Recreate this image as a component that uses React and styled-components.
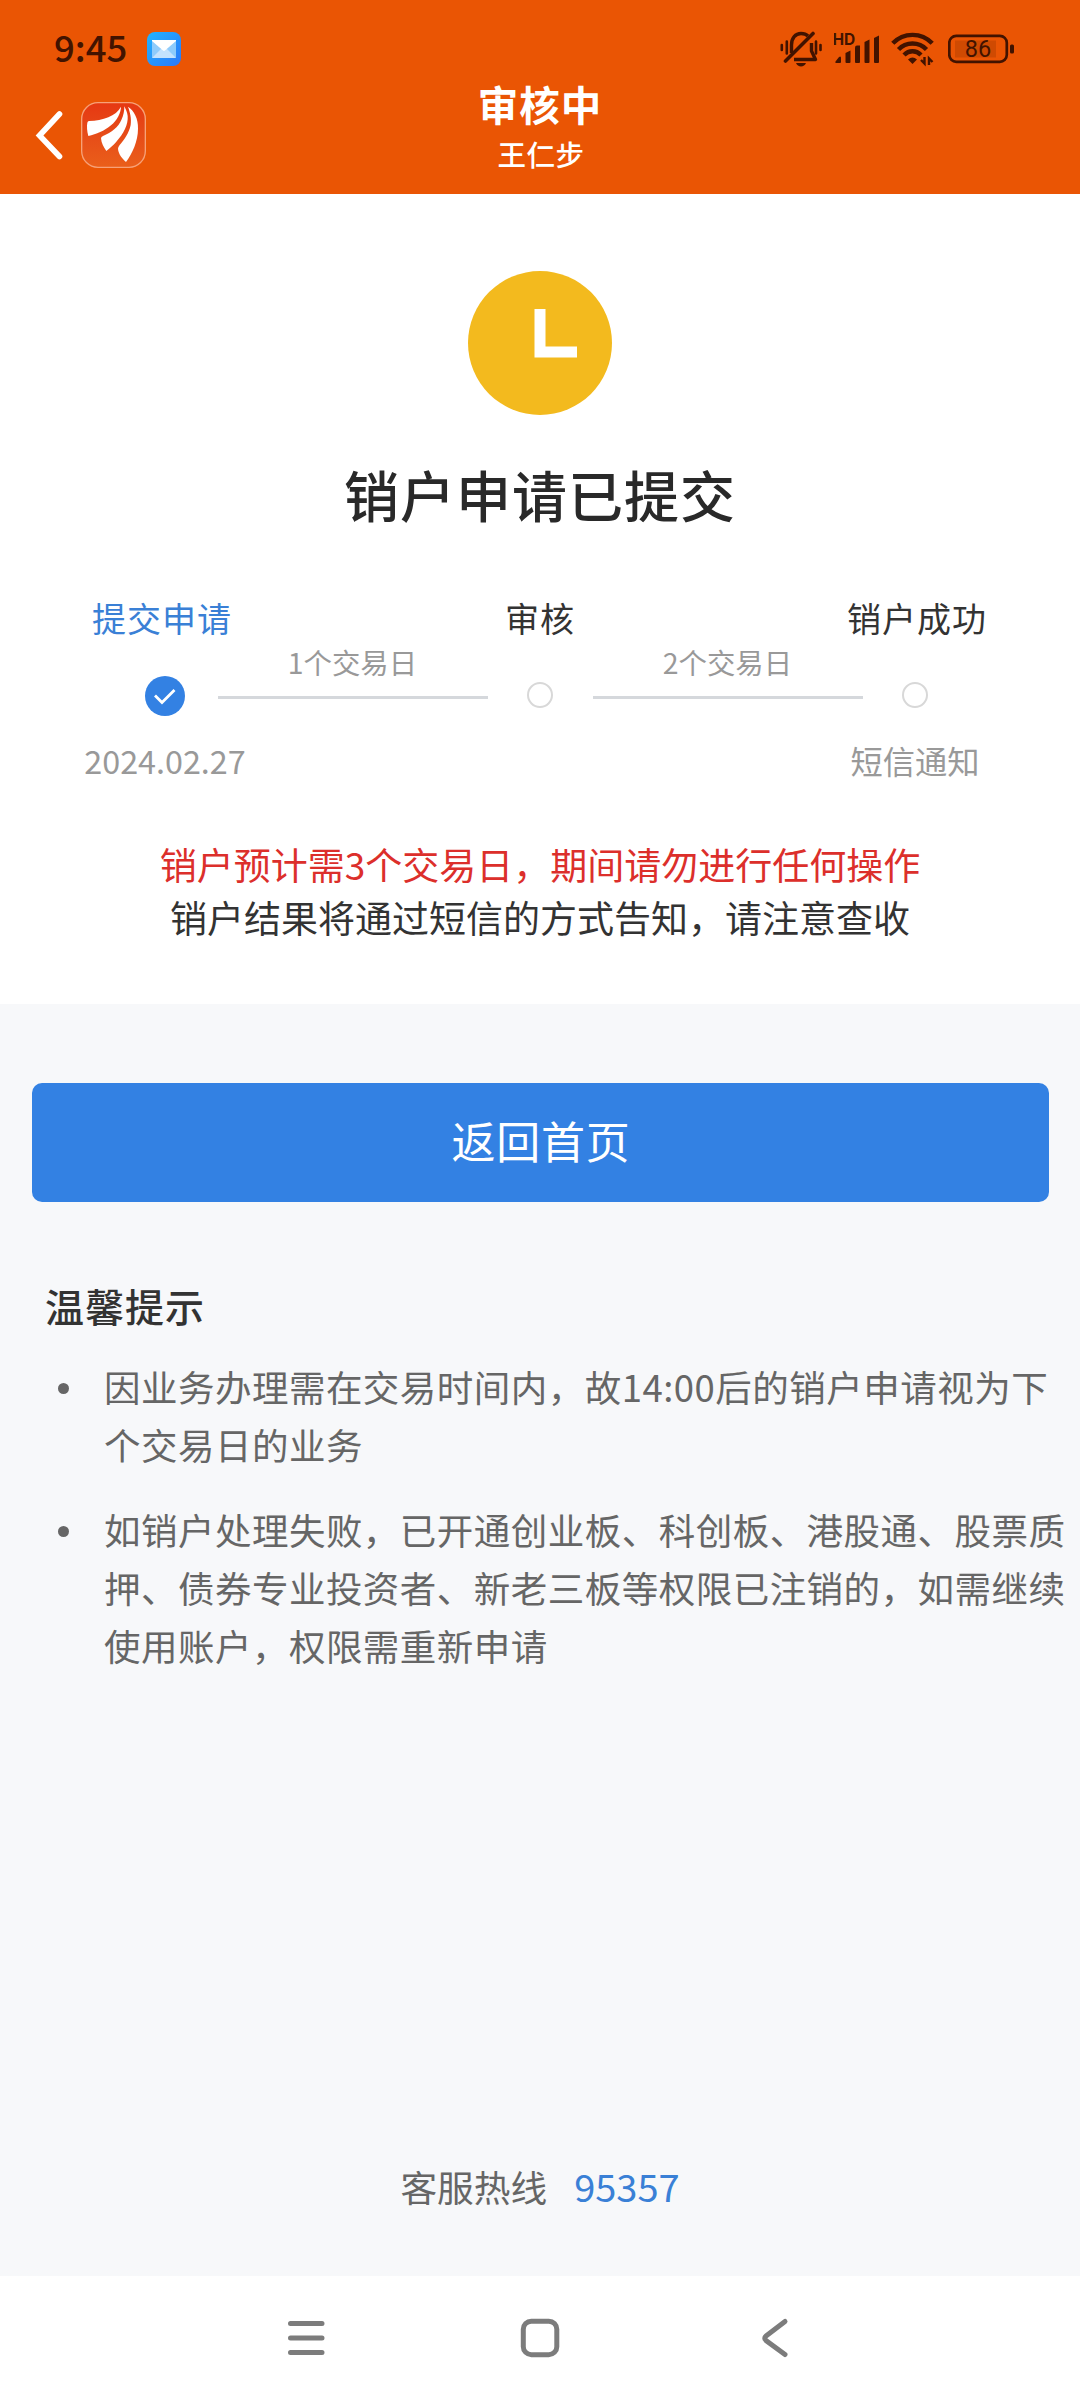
import React from 'react'
import styled, { createGlobalStyle } from 'styled-components'

const GlobalStyle = createGlobalStyle`
    * {
        box-sizing: border-box;
    }
    body {
        margin: 0;
        font-family: 'Noto Sans CJK SC', 'Noto Sans', sans-serif;
    }
`

const ink = '#421300'

const Screen = styled.div`
    display: flex;
    flex-direction: column;
    width: 1080px;
    height: 2400px;
    overflow: hidden;
    background: #f7f8fa;
`

const Header = styled.header`
    flex: none;
    height: 194px;
    background: #ea5504;
`

const StatusBar = styled.div`
    display: flex;
    align-items: center;
    justify-content: space-between;
    height: 98px;
    padding: 0 66px 0 54px;
`

const StatusGroup = styled.div`
    display: flex;
    align-items: center;
    gap: ${(props) => props.$gap}px;
`

const Time = styled.span`
    margin-top: -5px;
    font-size: 36.5px;
    line-height: 50px;
    font-weight: 500;
    color: ${ink};
`

const TitleBar = styled.div`
    display: grid;
    grid-template-columns: 1fr 240px 1fr;
    height: 96px;
    margin-top: -20px;
`

const TitleLeft = styled.div`
    display: flex;
    align-items: center;
    gap: 18px;
    padding: 18px 0 0 35px;
    height: 96px;
`

const Titles = styled.div`
    display: flex;
    flex-direction: column;
    align-items: center;
    color: #fff;
`

const Title = styled.h1`
    margin: 0;
    font-size: 40.5px;
    line-height: 52px;
    letter-spacing: 1px;
    font-weight: 700;
`

const Subtitle = styled.div`
    padding: 1px 0 0 2px;
    font-size: 28.5px;
    line-height: 46px;
    letter-spacing: 0.5px;
    font-weight: 500;
`

const Result = styled.section`
    display: flex;
    flex-direction: column;
    align-items: center;
    flex: none;
    height: 810px;
    padding-top: 77px;
    background: #fff;
`

const ResultTitle = styled.h2`
    margin: 38px 0 0;
    font-size: 55px;
    line-height: 80px;
    letter-spacing: 1px;
    font-weight: 500;
    color: #292929;
`

const Steps = styled.div`
    display: flex;
    margin-top: 59px;
`

const StepItem = styled.div`
    display: flex;
    flex-direction: column;
    align-items: center;
    width: 105px;
`

const StepLabel = styled.div`
    padding: 1px ${(props) => props.$insetRight || 0}px 0 ${(props) => props.$insetLeft || 0}px;
    font-size: 34px;
    line-height: 50px;
    letter-spacing: 1px;
    white-space: nowrap;
    color: ${(props) => (props.$active ? '#3a80d6' : '#333')};
`

const DotSlot = styled.div`
    display: flex;
    align-items: center;
    justify-content: center;
    height: 40px;
    margin-top: 33px;
`

const Dot = styled.span`
    width: 26px;
    height: 26px;
    margin-bottom: 3px;
    border: 2px solid #d8d8d8;
    border-radius: 50%;
`

const StepNote = styled.div`
    margin-top: 19px;
    font-size: 32.3px;
    line-height: 50px;
    white-space: nowrap;
    color: #999;
`

const Connector = styled.div`
    width: 270px;
    height: 107px;
    padding-top: 48px;
    border-bottom: 3px solid #d5d8dc;
    font-size: 28.4px;
    line-height: 44px;
    text-align: center;
    color: #999;
`

const Notice = styled.p`
    margin: 0;
    font-size: 37px;
    line-height: 53px;
    color: ${(props) => (props.$warn ? '#dc2f2b' : '#333')};
`

const Notices = styled.div`
    margin-top: 53px;
    text-align: center;
`

const Content = styled.main`
    display: flex;
    flex-direction: column;
    flex: 1;
    padding: 79px 0 65px;
`

const HomeButton = styled.button`
    flex: none;
    height: 119px;
    margin: 0 31px 0 32px;
    padding: 0 0 5px 1px;
    border: 0;
    border-radius: 10px;
    font-family: inherit;
    font-size: 44px;
    line-height: 60px;
    letter-spacing: 0.7px;
    color: #fff;
    background: #3381e3;
`

const TipsTitle = styled.h3`
    margin: 73px 0 0 45px;
    font-size: 39px;
    line-height: 60px;
    letter-spacing: 1px;
    font-weight: 500;
    color: #333;
`

const TipList = styled.ul`
    display: flex;
    flex-direction: column;
    gap: 27px;
    margin: 23px 0 0;
    padding: 0 12px 0 58px;
    list-style: none;
`

const Tip = styled.li`
    display: flex;
    gap: 35px;
    font-size: 36.5px;
    line-height: 58px;
    letter-spacing: 0.48px;
    color: #666;

    &::before {
        content: '';
        flex: none;
        width: 11px;
        height: 11px;
        margin-top: 25px;
        border-radius: 50%;
        background: #666;
    }
`

const Hotline = styled.div`
    display: flex;
    align-items: center;
    justify-content: center;
    gap: 27px;
    margin-top: auto;
    font-size: 36.7px;
    line-height: 50px;
    color: #666;
`

const Phone = styled.a`
    font-size: 38px;
    color: #3a80d6;
`

const NavBar = styled.nav`
    display: flex;
    justify-content: space-between;
    flex: none;
    height: 124px;
    padding: 38px 283px 0;
    background: #fff;
`

function MailIcon() {
    return (
        <svg width="34" height="34" viewBox="0 0 34 34">
            <defs>
                <linearGradient id="mail" x1="0" y1="0" x2="1" y2="1">
                    <stop offset="0" stopColor="#22b4ff" />
                    <stop offset="1" stopColor="#2b77f8" />
                </linearGradient>
            </defs>
            <rect width="34" height="34" rx="8" fill="url(#mail)" />
            <rect x="5" y="8" width="24" height="18" rx="1" fill="#8ecbfb" />
            <path d="M5 26 L14 17 H20 L29 26 Z" fill="#c3e2fd" />
            <path d="M5 8 H29 V9 L18 18.5 Q17 19.3 16 18.5 L5 9 Z" fill="#fff" />
        </svg>
    )
}

function MutedBell() {
    return (
        <svg width="42" height="36" viewBox="0 0 42 36" fill="none" stroke={ink} strokeWidth="3.4">
            <path d="M11.5 22 V14 C11.5 7 15.5 2.5 21 2.5 C24 2.5 26.5 3.5 28 5" />
            <path d="M31.5 12 V20 L35.5 28.5 H14" strokeLinejoin="round" />
            <path d="M5.5 30 L33 2.5" strokeWidth="3.6" strokeLinecap="round" />
            <path d="M16 32 H26 C24.5 36.5 17.5 36.5 16 32 Z" fill={ink} stroke="none" />
            <path d="M1.8 14 V19 M6.8 10.5 V22.5 M36 10.5 V22.5 M40.5 14 V19" strokeWidth="2.6" strokeLinecap="round" />
        </svg>
    )
}

function Signal() {
    return (
        <svg width="45" height="36" viewBox="1 0 45 36" fill={ink}>
            <text x="-0.5" y="14" fontSize="15.5" fontWeight="700" fontFamily="Inter, sans-serif">
                HD
            </text>
            <path d="M3 32 Q2 32 2.5 30.5 L6 26 Q8 24.5 8 27 V31 Q8 32 7 32 Z" />
            <path d="M12.5 22 L17.5 19.5 V31 Q17.5 32 16.5 32 H13.5 Q12.5 32 12.5 31 Z" />
            <path d="M22 16.5 Q22 14.5 24 14.5 H27 V31 Q27 32 26 32 H23 Q22 32 22 31 Z" />
            <path d="M31.5 11 L36.5 8.5 V31 Q36.5 32 35.5 32 H32.5 Q31.5 32 31.5 31 Z" />
            <path d="M41 7 L46 4.5 V31 Q46 32 45 32 H42 Q41 32 41 31 Z" />
        </svg>
    )
}

function Wifi() {
    return (
        <svg width="45" height="36" viewBox="0 0 45 36" fill="none" stroke={ink} strokeWidth="4.4">
            <path d="M1.8 12.3 C12.5 1 30.5 1 41.2 12.3" />
            <path d="M7.5 18.5 C15 10.5 28 10.5 35.5 18.5" />
            <path d="M13 24 C18 19 25 19 30 24" />
            <path d="M17 28.5 Q21.5 24.5 26 28.5 L21.5 33 Z" fill={ink} stroke="none" />
            <path d="M30 29 L33.5 32.5 V26 M38 34 V27.5 L41.5 31" strokeWidth="2.4" />
        </svg>
    )
}

function Battery() {
    return (
        <svg width="66" height="30" viewBox="0 0 66 30">
            <rect x="7" y="6.5" width="41" height="17" fill="#cf4a02" />
            <rect x="1.3" y="1.8" width="57.5" height="26" rx="7" fill="none" stroke={ink} strokeWidth="2.7" />
            <rect x="62" y="10.5" width="4" height="9" rx="1.5" fill={ink} />
            <text x="30" y="23" textAnchor="middle" fontSize="23.5" fontFamily="Roboto, sans-serif" fill={ink}>
                86
            </text>
        </svg>
    )
}

function BackArrow() {
    return (
        <svg width="28" height="50" viewBox="0 0 28 50" fill="none" stroke="#fff" strokeWidth="5.6">
            <path d="M24.5 4 L4.5 25.5 L24.5 46.5" strokeLinecap="round" strokeLinejoin="miter" />
        </svg>
    )
}

function BrandLogo() {
    return (
        <svg width="65" height="66" viewBox="0 0 195 198">
            <defs>
                <linearGradient id="brand" x1="0" y1="0" x2="0" y2="1">
                    <stop offset="0" stopColor="#e63812" />
                    <stop offset="0.45" stopColor="#e64a18" />
                    <stop offset="1" stopColor="#ea5f1a" />
                </linearGradient>
            </defs>
            <rect x="2" y="2" width="191" height="194" rx="49" fill="url(#brand)" stroke="#f7a178" strokeWidth="4" />
            <g fill="#fff">
                <path d="M24 57 C66 55 105 43 120 14 C120 32 108 55 90 70 C70 87 46 97 22 102 C18 88 17 72 19 62 Q20 58 24 57 Z" />
                <path d="M130 13 C134 22 139 30 140 42 C142 68 128 95 106 119 C96 130 86 139 76 147 C68 136 61 124 60 109 Q60 104 66 102 C92 91 112 75 121 54 C128 40 130 27 130 13 Z" />
                <path d="M141 14 C160 27 172 50 171 80 C171 118 154 154 135 180 C124 170 112 156 111 140 Q111 135 116 129 C130 113 144 93 149 69 C152 49 147 30 141 14 Z" />
            </g>
        </svg>
    )
}

function ClockBadge() {
    return (
        <svg width="144" height="144" viewBox="0 0 144 144">
            <circle cx="72" cy="72" r="72" fill="#f3ba1e" />
            <path d="M72 38 V81 H109" fill="none" stroke="#fff" strokeWidth="11" />
        </svg>
    )
}

function CheckDot() {
    return (
        <svg width="40" height="40" viewBox="0 0 40 40">
            <circle cx="20" cy="20" r="20" fill="#3381e3" />
            <path d="M10 19.5 L17 26.5 L29.5 14" fill="none" stroke="#fff" strokeWidth="2.8" />
        </svg>
    )
}

function NavIcon({ d, box }) {
    return (
        <svg width="46" height="48" viewBox="0 0 46 48" fill="none" stroke="#7c7c7c" strokeWidth="5" strokeLinecap="round">
            {box ? <rect x="6.3" y="7.2" width="33.5" height="33.5" rx="8" /> : <path d={d} />}
        </svg>
    )
}

const steps = [
    { label: '提交申请', note: '2024.02.27', done: true, insetRight: 6, next: '1个交易日' },
    { label: '审核', next: '2个交易日' },
    { label: '销户成功', note: '短信通知', insetLeft: 4 },
]

const tips = [
    '因业务办理需在交易时间内，故14:00后的销户申请视为下个交易日的业务',
    '如销户处理失败，已开通创业板、科创板、港股通、股票质押、债券专业投资者、新老三板等权限已注销的，如需继续使用账户，权限需重新申请',
]

function App() {
    return (
        <Screen>
            <GlobalStyle />
            <Header>
                <StatusBar>
                    <StatusGroup $gap={20}>
                        <Time>9:45</Time>
                        <MailIcon />
                    </StatusGroup>
                    <StatusGroup $gap={12}>
                        <MutedBell />
                        <Signal />
                        <Wifi />
                        <Battery />
                    </StatusGroup>
                </StatusBar>
                <TitleBar>
                    <TitleLeft>
                        <BackArrow />
                        <BrandLogo />
                    </TitleLeft>
                    <Titles>
                        <Title>审核中</Title>
                        <Subtitle>王仁步</Subtitle>
                    </Titles>
                </TitleBar>
            </Header>
            <Result>
                <ClockBadge />
                <ResultTitle>销户申请已提交</ResultTitle>
                <Steps>
                    {steps.map((step) => (
                        <React.Fragment key={step.label}>
                            <StepItem>
                                <StepLabel
                                    $active={step.done}
                                    $insetLeft={step.insetLeft}
                                    $insetRight={step.insetRight}
                                >
                                    {step.label}
                                </StepLabel>
                                <DotSlot>{step.done ? <CheckDot /> : <Dot />}</DotSlot>
                                {step.note && <StepNote>{step.note}</StepNote>}
                            </StepItem>
                            {step.next && <Connector>{step.next}</Connector>}
                        </React.Fragment>
                    ))}
                </Steps>
                <Notices>
                    <Notice $warn>销户预计需3个交易日，期间请勿进行任何操作</Notice>
                    <Notice>销户结果将通过短信的方式告知，请注意查收</Notice>
                </Notices>
            </Result>
            <Content>
                <HomeButton>返回首页</HomeButton>
                <TipsTitle>温馨提示</TipsTitle>
                <TipList>
                    {tips.map((tip) => (
                        <Tip key={tip}>{tip}</Tip>
                    ))}
                </TipList>
                <Hotline>
                    客服热线
                    <Phone>95357</Phone>
                </Hotline>
            </Content>
            <NavBar>
                <NavIcon d="M7.5 9.5 H39 M7.5 24 H39 M7.5 38.5 H39" />
                <NavIcon box />
                <NavIcon d="M34 7.5 L15 22 Q12.5 24 15 26.5 L34 40.5" />
            </NavBar>
        </Screen>
    )
}

export default App
